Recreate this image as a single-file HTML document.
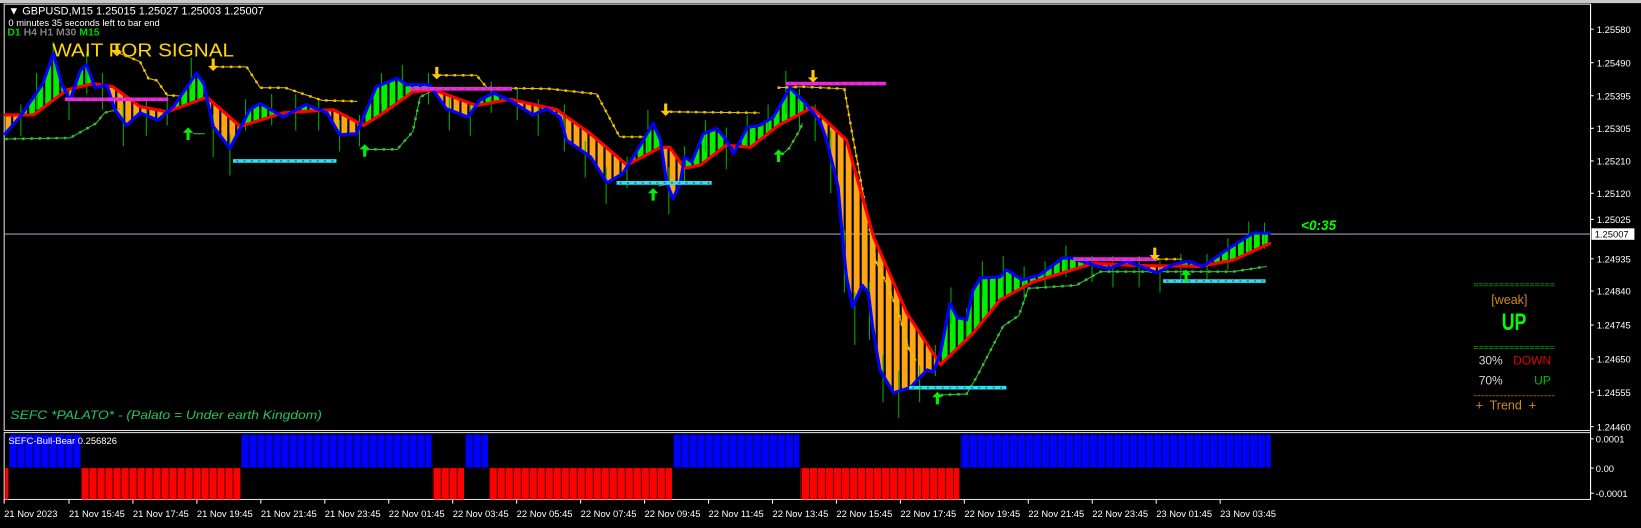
<!DOCTYPE html>
<html><head><meta charset="utf-8">
<style>
html,body{margin:0;padding:0;background:#000;width:1641px;height:528px;overflow:hidden}
svg{display:block}
text{font-family:"Liberation Sans",sans-serif}
</style></head>
<body>
<svg width="1641" height="528" viewBox="0 0 1570.3 505.3" preserveAspectRatio="none" xmlns="http://www.w3.org/2000/svg">
<defs>
<pattern id="pg" patternUnits="userSpaceOnUse" x="5" y="0" width="7.66" height="20"><rect x="0" y="0" width="5.6" height="20" fill="#00f000"/></pattern>
<pattern id="po" patternUnits="userSpaceOnUse" x="5" y="0" width="7.66" height="20"><rect x="0" y="0" width="5.6" height="20" fill="#ffa514"/></pattern>
<pattern id="pb" patternUnits="userSpaceOnUse" x="9" y="0" width="7.66" height="20"><rect x="0" y="0" width="6.9" height="20" fill="#0000ff"/></pattern>
<pattern id="pr" patternUnits="userSpaceOnUse" x="9" y="0" width="7.66" height="20"><rect x="0" y="0" width="6.9" height="20" fill="#ff0000"/></pattern>
<clipPath id="above"><polygon points="5,110 32,110 64,86 89,80 108,83 134,102 160,107 198,93 230,121 271,108 319,105 348,120 364,110 395,88 415,86 456,101 488,95 533,105 565,128 600,158 632,141 641,141 655,161 670,158 695,139 718,141 745,120 777,103 810,134 836,227 868,300 900,349 931,319 957,287 988,270 1046,252 1084,254 1148,255 1180,249 1215,233 1215,0 5,0"/></clipPath>
<clipPath id="below"><polygon points="5,110 32,110 64,86 89,80 108,83 134,102 160,107 198,93 230,121 271,108 319,105 348,120 364,110 395,88 415,86 456,101 488,95 533,105 565,128 600,158 632,141 641,141 655,161 670,158 695,139 718,141 745,120 777,103 810,134 836,227 868,300 900,349 931,319 957,287 988,270 1046,252 1084,254 1148,255 1180,249 1215,233 1215,505 5,505"/></clipPath>
<polygon id="between" fill-rule="nonzero" points="5,128 19,112 41,80 51,51 59,80 67,96 77,67 83,62 91,84 102,81 110,105 121,120 134,108 151,115 166,102 188,70 195,80 204,121 220,142 239,105 249,99 271,112 293,100 313,108 325,129 341,128 360,83 380,75 389,81 411,81 427,104 448,112 459,96 472,89 488,96 510,110 523,104 536,112 542,134 565,150 581,175 596,166 612,140 625,118 632,134 638,175 644,190 651,175 655,150 662,155 673,128 686,123 695,134 702,147 715,122 727,120 740,112 756,84 772,100 785,117 791,134 802,179 807,236 810,265 816,294 825,273 831,280 835,313 842,354 855,376 871,371 887,354 893,356 900,338 909,290 916,304 925,306 931,278 938,266 957,265 963,258 978,268 995,263 1017,247 1026,247 1051,255 1062,257 1078,250 1107,261 1123,253 1137,250 1151,255 1174,239 1199,223 1215,223 1215,233 1180,249 1148,255 1084,254 1046,252 988,270 957,287 931,319 900,349 868,300 836,227 810,134 777,103 745,120 718,141 695,139 670,158 655,161 641,141 632,141 600,158 565,128 533,105 488,95 456,101 415,86 395,88 364,110 348,120 319,105 271,108 230,121 198,93 160,107 134,102 108,83 89,80 64,86 32,110 5,110"/>
<path id="up" d="M0,-7 L5,-2 L1.5,-2 L1.5,5 L-1.5,5 L-1.5,-2 L-5,-2Z" fill="#00f000"/>
<path id="dn" d="M0,6 L5,1 L1.5,1 L1.5,-6 L-1.5,-6 L-1.5,1 L-5,1Z" fill="#ffc800"/>
</defs>
<rect x="0" y="0" width="1570.3" height="505.3" fill="#000"/>
<rect x="0" y="0" width="1570.3" height="3" fill="#c8c8c8"/>
<rect x="4" y="4" width="1518" height="408" fill="none" stroke="#e0e0e0" stroke-width="1"/>
<rect x="4" y="414" width="1518" height="64" fill="none" stroke="#e0e0e0" stroke-width="1"/>
<line x1="4" y1="224" x2="1522" y2="224" stroke="#9aa0a8" stroke-width="1"/>

<use href="#between" fill="url(#pg)" clip-path="url(#above)"/>
<use href="#between" fill="url(#po)" clip-path="url(#below)"/>

<path stroke="#00b000" stroke-width="1" fill="none" d="M20,100v30 M35,70v35 M51,40v30 M66,85v30 M83,50v40 M98,70v35 M118,100v40 M140,95v35 M160,90v30 M183,55v30 M204,110v40 M220,128v40 M235,95v30 M260,90v30 M283,90v35 M305,95v30 M325,115v30 M344,110v30 M365,70v30 M385,62v30 M410,70v30 M430,90v35 M450,100v30 M470,78v30 M495,85v30 M515,95v35 M540,100v45 M560,135v35 M580,160v35 M600,150v30 M620,105v40 M640,160v45 M655,140v35 M675,115v30 M695,122v40 M715,110v30 M735,100v30 M752,68v40 M765,85v40 M780,100v35 M795,125v60 M808,220v60 M818,280v50 M832,270v55 M845,340v45 M860,355v45 M880,350v35 M895,330v30 M910,275v35 M925,295v30 M940,250v35 M960,245v35 M980,255v30 M1000,250v25 M1020,235v30 M1045,245v25 M1065,245v30 M1090,245v30 M1110,250v30 M1130,243v25 M1155,243v25 M1175,228v30 M1195,212v30 M1210,213v25"/>

<g fill="none" stroke="#e8c000">
<g stroke-width="1">
<polyline points="112,50 134,59 142,75 150,77 160,91 174,92"/>
<polyline points="204,64 236,64 249,84 273,84 308,96 342,97"/>
<polyline points="418,72 456,72 466,84 526,85 571,90 593,131 617,131"/>
<polyline points="641,107 727,108"/>
<polyline points="744,84 768,83 808,85 815,125 825,180 838,250 850,275 860,300 870,335 877,345"/>
<polyline points="1107,248 1131,248"/>
</g>
<g stroke-width="2.4" stroke-dasharray="2.4 5.6">
<polyline points="112,50 134,59 142,75 150,77 160,91 174,92"/>
<polyline points="204,64 236,64 249,84 273,84 308,96 342,97"/>
<polyline points="418,72 456,72 466,84 526,85 571,90 593,131 617,131"/>
<polyline points="641,107 727,108"/>
<polyline points="744,84 768,83 808,85 815,125 825,180 838,250 850,275 860,300 870,335 877,345"/>
<polyline points="1107,248 1131,248"/>
</g>
</g>
<g fill="none" stroke="#30c030">
<g stroke-width="1">
<polyline points="5,133 67,132 92,118 100,108 115,104"/>
<polyline points="185,128 196,128"/>
<polyline points="350,143 380,143 395,126 402,93 411,88"/>
<polyline points="630,178 640,176"/>
<polyline points="748,148 755,142 765,125 768,118"/>
<polyline points="900,378 925,377 935,360 948,335 960,312 975,302 984,276 1030,273 1053,260 1100,260 1180,260 1212,255"/>
</g>
<g stroke-width="2.4" stroke-dasharray="2.4 5.6">
<polyline points="5,133 67,132 92,118 100,108 115,104"/>
<polyline points="350,143 380,143 395,126 402,93 411,88"/>
<polyline points="748,148 755,142 765,125 768,118"/>
<polyline points="900,378 925,377 935,360 948,335 960,312 975,302 984,276 1030,273 1053,260 1100,260 1180,260 1212,255"/>
</g>
</g>

<polyline fill="none" stroke="#ff0000" stroke-width="3" stroke-linejoin="round" stroke-linecap="round" points="5,110 32,110 64,86 89,80 108,83 134,102 160,107 198,93 230,121 271,108 319,105 348,120 364,110 395,88 415,86 456,101 488,95 533,105 565,128 600,158 632,141 641,141 655,161 670,158 695,139 718,141 745,120 777,103 810,134 836,227 868,300 900,349 931,319 957,287 988,270 1046,252 1084,254 1148,255 1180,249 1215,233"/>
<polyline fill="none" stroke="#0000ff" stroke-width="3" stroke-linejoin="round" stroke-linecap="round" points="5,128 19,112 41,80 51,51 59,80 67,96 77,67 83,62 91,84 102,81 110,105 121,120 134,108 151,115 166,102 188,70 195,80 204,121 220,142 239,105 249,99 271,112 293,100 313,108 325,129 341,128 360,83 380,75 389,81 411,81 427,104 448,112 459,96 472,89 488,96 510,110 523,104 536,112 542,134 565,150 581,175 596,166 612,140 625,118 632,134 638,175 644,190 651,175 655,150 662,155 673,128 686,123 695,134 702,147 715,122 727,120 740,112 756,84 772,100 785,117 791,134 802,179 807,236 810,265 816,294 825,273 831,280 835,313 842,354 855,376 871,371 887,354 893,356 900,338 909,290 916,304 925,306 931,278 938,266 957,265 963,258 978,268 995,263 1017,247 1026,247 1051,255 1062,257 1078,250 1107,261 1123,253 1137,250 1151,255 1174,239 1199,223 1215,223"/>

<g stroke-width="3.5">
<line x1="62" y1="95" x2="161" y2="95" stroke="#ff20e0"/>
<line x1="392" y1="85" x2="490" y2="85" stroke="#ff20e0"/>
<line x1="752" y1="80" x2="848" y2="80" stroke="#ff20e0"/>
<line x1="1027" y1="248" x2="1107" y2="248" stroke="#ff20e0"/>
<line x1="223" y1="154" x2="322" y2="154" stroke="#20e8f0"/>
<line x1="590" y1="175" x2="681" y2="175" stroke="#20e8f0"/>
<line x1="870" y1="371" x2="963" y2="371" stroke="#20e8f0"/>
<line x1="1113" y1="269" x2="1211" y2="269" stroke="#20e8f0"/>
</g>
<g stroke-width="1.6" stroke="#6060a0" stroke-dasharray="2 5">
<line x1="65" y1="95" x2="161" y2="95"/><line x1="395" y1="85" x2="490" y2="85"/><line x1="755" y1="80" x2="848" y2="80"/><line x1="1030" y1="248" x2="1107" y2="248"/>
<line x1="226" y1="154" x2="322" y2="154"/><line x1="593" y1="175" x2="681" y2="175"/><line x1="873" y1="371" x2="963" y2="371"/><line x1="1116" y1="269" x2="1211" y2="269"/>
</g>

<use href="#up" x="180" y="129"/><use href="#up" x="349" y="145"/><use href="#up" x="625" y="187"/><use href="#up" x="745" y="150"/><use href="#up" x="897" y="382"/><use href="#up" x="1135" y="265"/>
<use href="#dn" x="112" y="48"/><use href="#dn" x="204" y="62"/><use href="#dn" x="418" y="70"/><use href="#dn" x="637" y="105"/><use href="#dn" x="778" y="73"/><use href="#dn" x="1105" y="243"/>

<rect x="5" y="448" width="3" height="30" fill="#ff0000"/>
<g>
<rect x="9" y="416" width="68" height="31.5" fill="url(#pb)"/>
<rect x="78" y="448" width="152" height="30" fill="url(#pr)"/>
<rect x="231" y="416" width="182" height="31.5" fill="url(#pb)"/>
<rect x="414" y="448" width="30" height="30" fill="url(#pr)"/>
<rect x="445" y="416" width="22" height="31.5" fill="url(#pb)"/>
<rect x="468" y="448" width="175" height="30" fill="url(#pr)"/>
<rect x="644" y="416" width="121" height="31.5" fill="url(#pb)"/>
<rect x="766" y="448" width="152" height="30" fill="url(#pr)"/>
<rect x="919" y="416" width="297" height="31.5" fill="url(#pb)"/>
</g>

<text x="8" y="14" fill="#fff" font-size="10.5">&#9660; GBPUSD,M15  1.25015 1.25027 1.25003 1.25007</text>
<text x="8" y="25" fill="#fff" font-size="9">0 minutes 35 seconds left to bar end</text>
<text x="7" y="34" font-size="10" font-weight="bold"><tspan fill="#00d000">D1 </tspan><tspan fill="#808080">H4 H1 M30 </tspan><tspan fill="#00d000">M15</tspan></text>
<text x="50" y="54" fill="#ffd800" font-size="18" textLength="174" lengthAdjust="spacingAndGlyphs">WAIT FOR SIGNAL</text>
<text x="10" y="401" fill="#22c85a" font-size="11.5" font-style="italic" font-family="Liberation Serif, serif" textLength="298" lengthAdjust="spacingAndGlyphs">SEFC *PALATO* - (Palato = Under earth Kingdom)</text>
<text x="1245" y="220" fill="#00ff00" font-size="13" font-weight="bold" font-style="italic">&lt;0:35</text>

<text x="1410" y="275" fill="#00c000" font-size="8" textLength="78" lengthAdjust="spacingAndGlyphs">================</text>
<text x="1427" y="291" fill="#d08a20" font-size="12">[weak]</text>
<text x="1437" y="316" fill="#00ff00" font-size="17" font-weight="bold" transform="translate(0,316) scale(1,1.35) translate(0,-316)">UP</text>
<text x="1410" y="335" fill="#00c000" font-size="8" textLength="78" lengthAdjust="spacingAndGlyphs">================</text>
<text x="1415" y="349" fill="#d8d8d8" font-size="11.5">30%</text>
<text x="1448" y="349" fill="#e00000" font-size="11.5">DOWN</text>
<text x="1415" y="368" fill="#d8d8d8" font-size="11.5">70%</text>
<text x="1468" y="368" fill="#00c000" font-size="11.5">UP</text>
<text x="1410" y="381" fill="#d08a20" font-size="8" textLength="78" lengthAdjust="spacingAndGlyphs">----------------------</text>
<text x="1412" y="392" fill="#d08a20" font-size="12" xml:space="preserve">+  Trend  +</text>
<text x="8" y="425" fill="#fff" font-size="9">SEFC-Bull-Bear 0.256826</text>

<line x1="1522" y1="4" x2="1522" y2="478" stroke="#fff" stroke-width="1"/>
<g font-size="9" fill="#fff">
<path stroke="#fff" d="M1522,28h3 M1522,60h3 M1522,91.6h3 M1522,122.8h3 M1522,154h3 M1522,185h3 M1522,210h3 M1522,247.6h3 M1522,278.5h3 M1522,311h3 M1522,343.5h3 M1522,375.4h3 M1522,408.3h3 M1522,420h3 M1522,448h3 M1522,472h3"/>
<text x="1528" y="31.5">1.25580</text>
<text x="1528" y="63.5">1.25490</text>
<text x="1528" y="95.1">1.25395</text>
<text x="1528" y="126.3">1.25305</text>
<text x="1528" y="157.5">1.25210</text>
<text x="1528" y="188.5">1.25120</text>
<text x="1528" y="213.5">1.25025</text>
<text x="1528" y="251.1">1.24935</text>
<text x="1528" y="282">1.24840</text>
<text x="1528" y="314.5">1.24745</text>
<text x="1528" y="347">1.24650</text>
<text x="1528" y="378.9">1.24555</text>
<text x="1528" y="411.8">1.24460</text>
<rect x="1523" y="218.5" width="41" height="11" fill="#fff"/>
<text x="1526" y="227.5" fill="#000">1.25007</text>
<text x="1527" y="423.5">0.0001</text>
<text x="1527" y="451.5">0.00</text>
<text x="1527" y="475.5">-0.0001</text>
<path stroke="#fff" d="M4,478v4 M66,478v4 M127.2,478v4 M188.4,478v4 M249.6,478v4 M310.8,478v4 M372,478v4 M433.2,478v4 M494.4,478v4 M555.6,478v4 M616.8,478v4 M678,478v4 M739.2,478v4 M800.4,478v4 M861.6,478v4 M922.8,478v4 M984,478v4 M1045.2,478v4 M1106.4,478v4 M1167.6,478v4"/>
<text x="4" y="495">21 Nov 2023</text>
<text x="66" y="495">21 Nov 15:45</text>
<text x="127.2" y="495">21 Nov 17:45</text>
<text x="188.4" y="495">21 Nov 19:45</text>
<text x="249.6" y="495">21 Nov 21:45</text>
<text x="310.8" y="495">21 Nov 23:45</text>
<text x="372" y="495">22 Nov 01:45</text>
<text x="433.2" y="495">22 Nov 03:45</text>
<text x="494.4" y="495">22 Nov 05:45</text>
<text x="555.6" y="495">22 Nov 07:45</text>
<text x="616.8" y="495">22 Nov 09:45</text>
<text x="678" y="495">22 Nov 11:45</text>
<text x="739.2" y="495">22 Nov 13:45</text>
<text x="800.4" y="495">22 Nov 15:45</text>
<text x="861.6" y="495">22 Nov 17:45</text>
<text x="922.8" y="495">22 Nov 19:45</text>
<text x="984" y="495">22 Nov 21:45</text>
<text x="1045.2" y="495">22 Nov 23:45</text>
<text x="1106.4" y="495">23 Nov 01:45</text>
<text x="1167.6" y="495">23 Nov 03:45</text>
</g>
</svg>
</body></html>
